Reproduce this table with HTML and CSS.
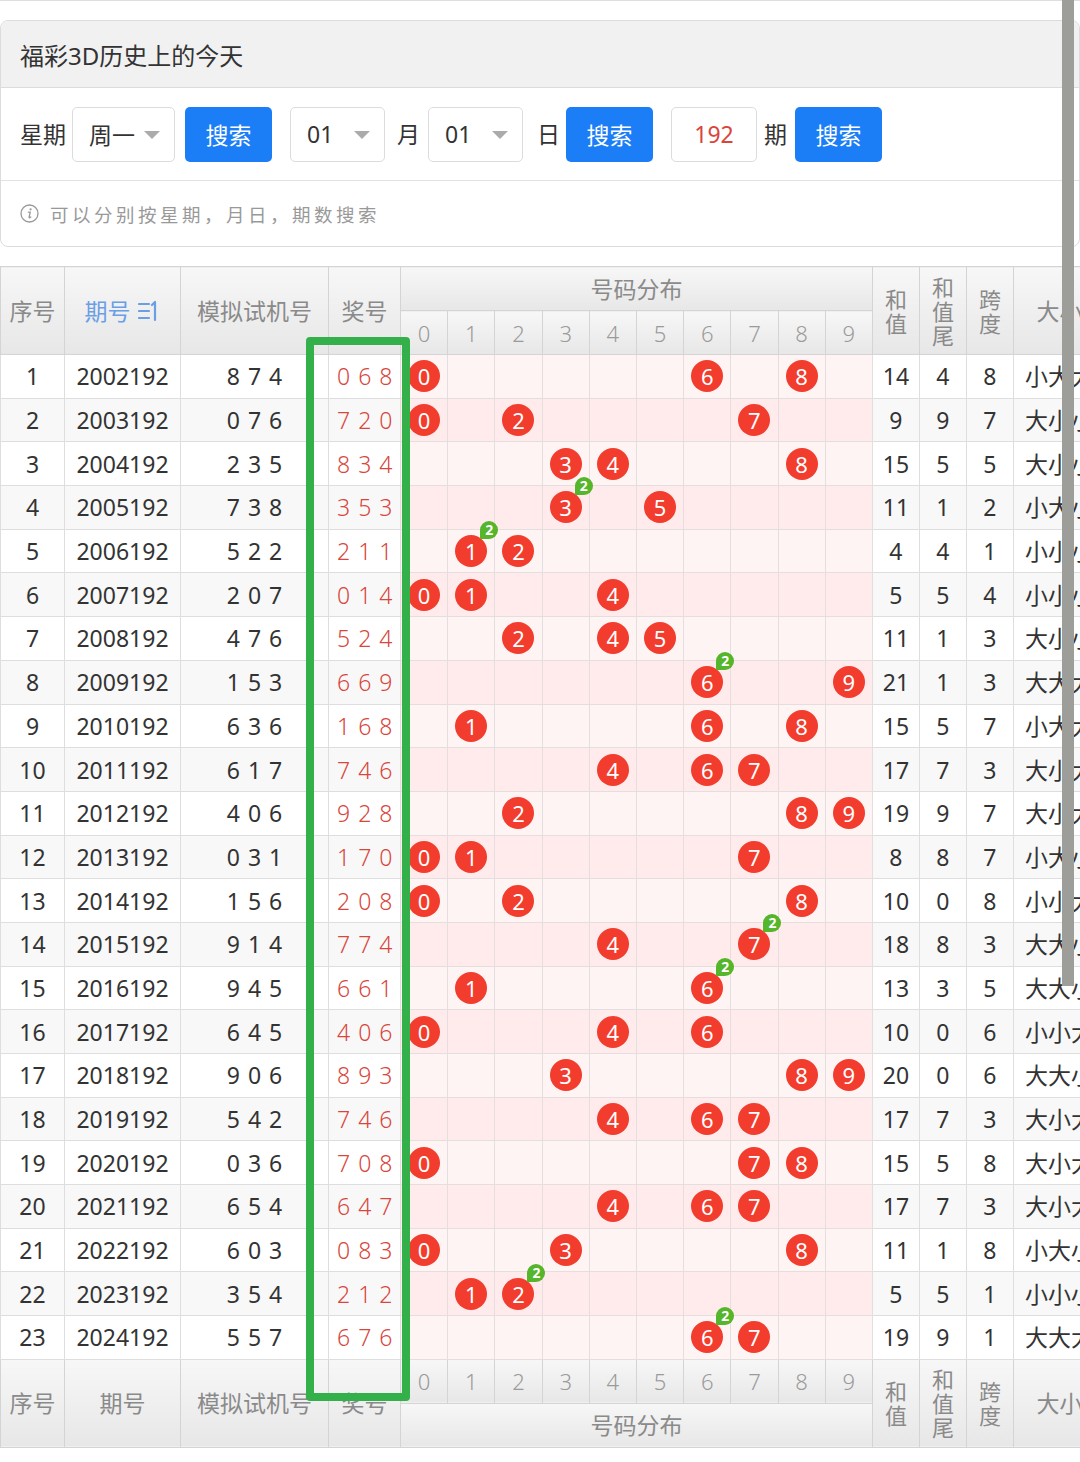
FILE: index.html
```html
<!DOCTYPE html>
<html lang="zh-CN">
<head>
<meta charset="utf-8">
<title>福彩3D历史上的今天</title>
<link rel="stylesheet" href="styles.css">
</head>
<body>
<div class="topline"></div>
<section class="card">
  <div class="card-head">福彩3D历史上的今天</div>
  <div class="search">
    <span class="lbl">星期</span>
    <div class="sel sel-week"><span>周一</span><i class="caret"></i></div>
    <button class="btn btn-a">搜索</button>
    <div class="sel sel-md sel-month"><span>01</span><i class="caret"></i></div>
    <span class="lbl lbl-month">月</span>
    <div class="sel sel-md sel-day"><span>01</span><i class="caret"></i></div>
    <span class="lbl lbl-day">日</span>
    <button class="btn btn-b">搜索</button>
    <div class="num">192</div>
    <span class="lbl lbl-qi">期</span>
    <button class="btn btn-c">搜索</button>
  </div>
  <div class="info">
    <svg class="info-ico" width="19" height="19" viewBox="0 0 19 19"><circle cx="9.5" cy="9.5" r="8.5" fill="none" stroke="#999" stroke-width="1.3"/><circle cx="10.6" cy="5.3" r="1.1" fill="#999"/><path d="M8.4 8.2 L10.3 8.2 L9.1 13.2 Q9 14 9.8 13.6 L10.8 13" fill="none" stroke="#999" stroke-width="1.3" stroke-linecap="round" stroke-linejoin="round"/></svg>
    <span class="info-text">可以分别按星期，月日，期数搜索</span>
  </div>
</section>

<div class="tablewrap">
  <table class="grid">
    <colgroup>
      <col class="c-no"><col class="c-qh"><col class="c-sj"><col class="c-jh">
      <col class="c-d"><col class="c-d"><col class="c-d"><col class="c-d"><col class="c-d">
      <col class="c-d"><col class="c-d"><col class="c-d"><col class="c-d"><col class="c-d">
      <col class="c-s"><col class="c-s"><col class="c-s"><col class="c-w"><col class="c-w"><col class="c-w">
    </colgroup>
    <thead>
      <tr class="hr">
        <th rowspan="2">序号</th>
        <th rowspan="2" class="sort">期号 <svg class="sort-ico" width="22" height="24" viewBox="0 0 22 24"><path d="M1 5 H11 M1 12 H11 M1 19 H11 M17 3 V21 M17 3 L14 6" fill="none" stroke="#6a9fe6" stroke-width="2.2" stroke-linecap="round"/></svg></th>
        <th rowspan="2">模拟试机号</th>
        <th rowspan="2">奖号</th>
        <th colspan="10">号码分布</th>
        <th rowspan="2" class="stack">和<br>值</th>
        <th rowspan="2" class="stack">和<br>值<br>尾</th>
        <th rowspan="2" class="stack">跨<br>度</th>
        <th rowspan="2">大小</th>
        <th rowspan="2">奇偶</th>
        <th rowspan="2">质合</th>
      </tr>
      <tr class="hr">
        <th class="dg">0</th><th class="dg">1</th><th class="dg">2</th><th class="dg">3</th><th class="dg">4</th>
        <th class="dg">5</th><th class="dg">6</th><th class="dg">7</th><th class="dg">8</th><th class="dg">9</th>
      </tr>
    </thead>
    <tbody id="rows"></tbody>
    <tfoot>
      <tr class="hr">
        <th rowspan="2">序号</th>
        <th rowspan="2">期号</th>
        <th rowspan="2">模拟试机号</th>
        <th rowspan="2">奖号</th>
        <th class="dg">0</th><th class="dg">1</th><th class="dg">2</th><th class="dg">3</th><th class="dg">4</th>
        <th class="dg">5</th><th class="dg">6</th><th class="dg">7</th><th class="dg">8</th><th class="dg">9</th>
        <th rowspan="2" class="stack">和<br>值</th>
        <th rowspan="2" class="stack">和<br>值<br>尾</th>
        <th rowspan="2" class="stack">跨<br>度</th>
        <th rowspan="2">大小</th>
        <th rowspan="2">奇偶</th>
        <th rowspan="2">质合</th>
      </tr>
      <tr class="hr">
        <th colspan="10">号码分布</th>
      </tr>
    </tfoot>
  </table>
  <div class="mark"></div>
</div>

<div class="thumb"></div>
<script src="script.js"></script>
</body>
</html>
```

FILE: styles.css
```css
* { box-sizing: border-box; }
html, body { margin: 0; padding: 0; background: #fff; }
body {
  width: 1080px;
  height: 1462px;
  overflow: hidden;
  position: relative;
  font-family: "Noto Sans", "Noto Sans CJK SC", sans-serif;
  color: #333;
}

.topline { height: 1px; background: #dedede; }

.card {
  margin-top: 19px;
  width: 1080px;
  border: 1px solid #dcdcdc;
  border-radius: 8px;
  overflow: hidden;
}
.card-head {
  height: 67px;
  display: flex;
  align-items: center;
  padding-left: 19px;
  background: #f1f1f1;
  border-bottom: 1px solid #dcdcdc;
  font-size: 24px;
  color: #333;
}
.search {
  height: 93px;
  display: flex;
  align-items: center;
  padding-left: 19px;
  border-bottom: 1px solid #e2e2e2;
}
.lbl { font-size: 23px; color: #333; line-height: 1; }
.lbl-month { margin-left: 12px; }
.lbl-day { margin-left: 14px; }
.lbl-qi { margin-left: 7px; }

.sel {
  height: 55px;
  display: flex;
  align-items: center;
  justify-content: space-between;
  padding: 0 14px 0 16px;
  border: 1px solid #dcdcdc;
  border-radius: 5px;
  font-size: 23px;
  color: #333;
}
.sel-week { width: 103px; margin-left: 6px; }
.sel-md { width: 95px; }
.sel-month { margin-left: 18px; }
.sel-day { margin-left: 8px; }
.caret {
  width: 0; height: 0;
  border-left: 8.5px solid transparent;
  border-right: 8.5px solid transparent;
  border-top: 8px solid #ababab;
  margin-top: 2px;
}

.btn {
  width: 87px;
  height: 55px;
  border: none;
  border-radius: 5px;
  background: #1b7ef6;
  color: #fff;
  font-family: inherit;
  font-size: 23px;
  padding: 0;
}
.btn-a { margin-left: 10px; }
.btn-b { margin-left: 6px; }
.btn-c { margin-left: 8px; }

.num {
  width: 86px;
  height: 55px;
  margin-left: 18px;
  border: 1px solid #dcdcdc;
  border-radius: 5px;
  display: flex;
  align-items: center;
  justify-content: center;
  color: #d9453b;
  font-size: 23px;
}

.info {
  height: 65px;
  display: flex;
  align-items: center;
  padding-left: 19px;
}
.info-ico { margin-right: 11px; }
.info-text { font-size: 18.5px; color: #999; letter-spacing: 3.5px; }

/* table */
.tablewrap {
  position: relative;
  margin-top: 19px;
  width: 1080px;
  overflow: hidden;
}
.grid {
  border-collapse: collapse;
  table-layout: fixed;
  width: 1289px;
}
.c-no { width: 64px; }
.c-qh { width: 116px; }
.c-sj { width: 148px; }
.c-jh { width: 72px; }
.c-d { width: 47.2px; }
.c-s { width: 47px; }
.c-w { width: 92px; }

.grid th {
  border: 1px solid #d4d4d4;
  background: linear-gradient(#f7f7f7, #e7e7e7);
  color: #8a8a8a;
  font-weight: normal;
  font-size: 23px;
  padding: 0;
  line-height: 24px;
  text-align: center;
  white-space: nowrap;
}
.grid tr.hr { height: 44px; }
.grid th.dg { color: #9a9a9a; font-size: 22px; font-weight: 300; }
.grid th.stack { font-size: 22px; line-height: 24px; white-space: normal; }
.grid th.sort { color: #6a9fe6; }
.sort-ico { vertical-align: -3px; margin-left: 2px; }

.grid tbody tr { height: 43.7px; }
.grid td {
  border: 1px solid #dedede;
  padding: 0;
  text-align: center;
  font-size: 23px;
  line-height: 26px;
  color: #333;
  white-space: nowrap;
  background: #fff;
}
.grid tr.even td { background: #f8f8f8; }
.grid td.d { font-size: 0; line-height: 0; background: #fff4f4; border-color: #e4dede; }
.grid tr.even td.d { background: #ffebeb; }
.grid td.sim { letter-spacing: 8px; text-indent: 8px; }
.grid td.win { color: #d8463c; letter-spacing: 8px; text-indent: 8px; font-weight: 300; }
.grid td.bs { overflow: hidden; }

.ball {
  position: relative;
  display: inline-block;
  vertical-align: middle;
  width: 32px;
  height: 32px;
  border-radius: 50%;
  background: #f23c2d;
  color: #fff;
  font-size: 22px;
  line-height: 32px;
  text-align: center;
}
.rep {
  position: absolute;
  left: 25px;
  top: -14px;
  width: 18px;
  height: 18px;
  border-radius: 9px 9px 9px 0;
  background: #55b52b;
  color: #fff;
  font-style: normal;
  font-size: 14px;
  font-weight: bold;
  line-height: 18px;
  text-align: center;
  z-index: 2;
}

.mark {
  position: absolute;
  left: 306px;
  top: 71px;
  width: 104px;
  height: 1064px;
  border: 8px solid #33b04a;
  border-radius: 4px;
  z-index: 3;
}

.thumb {
  position: absolute;
  left: 1062px;
  top: 0;
  width: 12px;
  height: 986px;
  background: #9d9e99;
  z-index: 5;
}
```

FILE: script.js
```js
var data = [
  ["2002192", "874", "068"],
  ["2003192", "076", "720"],
  ["2004192", "235", "834"],
  ["2005192", "738", "353"],
  ["2006192", "522", "211"],
  ["2007192", "207", "014"],
  ["2008192", "476", "524"],
  ["2009192", "153", "669"],
  ["2010192", "636", "168"],
  ["2011192", "617", "746"],
  ["2012192", "406", "928"],
  ["2013192", "031", "170"],
  ["2014192", "156", "208"],
  ["2015192", "914", "774"],
  ["2016192", "945", "661"],
  ["2017192", "645", "406"],
  ["2018192", "906", "893"],
  ["2019192", "542", "746"],
  ["2020192", "036", "708"],
  ["2021192", "654", "647"],
  ["2022192", "603", "083"],
  ["2023192", "354", "212"],
  ["2024192", "557", "676"]
];

var tbody = document.getElementById("rows");
var primes = { 1: 1, 2: 1, 3: 1, 5: 1, 7: 1 };

data.forEach(function (r, i) {
  var digits = r[2].split("").map(Number);
  var counts = [0, 0, 0, 0, 0, 0, 0, 0, 0, 0];
  digits.forEach(function (d) { counts[d]++; });
  var sum = digits[0] + digits[1] + digits[2];
  var span = Math.max.apply(null, digits) - Math.min.apply(null, digits);
  var bs = digits.map(function (d) { return d >= 5 ? "大" : "小"; }).join("");
  var oe = digits.map(function (d) { return d % 2 ? "奇" : "偶"; }).join("");
  var pc = digits.map(function (d) { return primes[d] ? "质" : "合"; }).join("");

  var html = "<td>" + (i + 1) + "</td>" +
    "<td>" + r[0] + "</td>" +
    "<td class=\"sim\">" + r[1] + "</td>" +
    "<td class=\"win\">" + r[2] + "</td>";
  for (var d = 0; d < 10; d++) {
    html += "<td class=\"d\">";
    if (counts[d] > 0) {
      html += "<span class=\"ball\">" + d +
        (counts[d] > 1 ? "<i class=\"rep\">" + counts[d] + "</i>" : "") +
        "</span>";
    }
    html += "</td>";
  }
  html += "<td>" + sum + "</td><td>" + (sum % 10) + "</td><td>" + span + "</td>" +
    "<td class=\"bs\">" + bs + "</td><td class=\"bs\">" + oe + "</td><td class=\"bs\">" + pc + "</td>";

  var tr = document.createElement("tr");
  tr.className = i % 2 ? "even" : "odd";
  tr.innerHTML = html;
  tbody.appendChild(tr);
});
```
